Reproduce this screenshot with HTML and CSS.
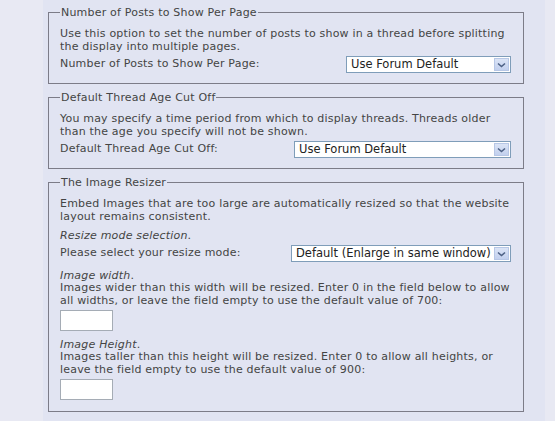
FILE: index.html
```html
<!DOCTYPE html>
<html>
<head>
<meta charset="utf-8">
<link rel="stylesheet" href="styles.css">
</head>
<body>
<div class="page">
  <fieldset class="box">
    <legend>Number of Posts to Show Per Page</legend>
    <div class="inner">
      <p class="desc">Use this option to set the number of posts to show in a thread before splitting the display into multiple pages.</p>
      <div class="row">
        <span class="label">Number of Posts to Show Per Page:</span>
        <div class="select w165"><span class="val">Use Forum Default</span><span class="arrow"><svg width="9" height="6" viewBox="0 0 9 6"><path d="M1 1.5 L4.5 4.5 L8 1.5" fill="none" stroke="#4d6185" stroke-width="1.6"/></svg></span></div>
      </div>
    </div>
  </fieldset>

  <fieldset class="box">
    <legend>Default Thread Age Cut Off</legend>
    <div class="inner">
      <p class="desc">You may specify a time period from which to display threads. Threads older than the age you specify will not be shown.</p>
      <div class="row">
        <span class="label">Default Thread Age Cut Off:</span>
        <div class="select w217"><span class="val">Use Forum Default</span><span class="arrow"><svg width="9" height="6" viewBox="0 0 9 6"><path d="M1 1.5 L4.5 4.5 L8 1.5" fill="none" stroke="#4d6185" stroke-width="1.6"/></svg></span></div>
      </div>
    </div>
  </fieldset>

  <fieldset class="box">
    <legend>The Image Resizer</legend>
    <div class="inner">
      <p class="desc">Embed Images that are too large are automatically resized so that the website layout remains consistent.</p>
      <div class="section">
        <p class="title"><em>Resize mode selection</em>.</p>
        <div class="row">
          <span class="label">Please select your resize mode:</span>
          <div class="select w220"><span class="val">Default (Enlarge in same window)</span><span class="arrow"><svg width="9" height="6" viewBox="0 0 9 6"><path d="M1 1.5 L4.5 4.5 L8 1.5" fill="none" stroke="#4d6185" stroke-width="1.6"/></svg></span></div>
        </div>
      </div>
      <div class="section">
        <p class="title"><em>Image width</em>.</p>
        <p class="text">Images wider than this width will be resized. Enter 0 in the field below to allow all widths, or leave the field empty to use the default value of 700:</p>
        <div class="input"></div>
      </div>
      <div class="section">
        <p class="title"><em>Image Height</em>.</p>
        <p class="text">Images taller than this height will be resized. Enter 0 to allow all heights, or leave the field empty to use the default value of 900:</p>
        <div class="input"></div>
      </div>
    </div>
  </fieldset>
</div>
</body>
</html>
```

FILE: styles.css
```css
html, body {
  margin: 0;
  padding: 0;
}
body {
  background: #e8e9f3;
  font-family: "DejaVu Sans", Verdana, sans-serif;
  font-size: 11px;
  letter-spacing: 0.2px;
  color: #444;
  width: 555px;
  height: 421px;
  overflow: hidden;
}
.page {
  margin-left: 43px;
  width: 502px;
  height: 421px;
  background: #e1e4f2;
  padding: 6px 0 0 5px;
  box-sizing: border-box;
}
.box {
  width: 476px;
  box-sizing: border-box;
  border: 1px solid #7c7c88;
  margin: 0 0 7px 0;
  padding: 0 11px 10px 11px;
  line-height: 13px;
}
.box:last-child {
  padding-bottom: 11px;
}
legend {
  padding: 0 1px;
  color: #444;
}
.inner {
  padding-top: 8px;
}
p {
  margin: 0;
}
.row {
  display: flex;
  align-items: flex-start;
  justify-content: space-between;
  margin-top: 3px;
}
.label {
  margin-top: 1px;
}
.select {
  height: 17px;
  box-sizing: border-box;
  border: 1px solid #7f9db9;
  background: #fff;
  display: flex;
  align-items: center;
  justify-content: space-between;
  font-size: 11.5px;
  letter-spacing: 0;
  color: #222;
  padding: 1px 1px 1px 4px;
  margin-right: 1px;
  white-space: nowrap;
}
.w165 { width: 165px; }
.w217 { width: 217px; }
.w220 { width: 220px; }
.arrow {
  flex: none;
  width: 15px;
  height: 13px;
  box-sizing: border-box;
  border: 1px solid #b7c7e6;
  background: linear-gradient(#dbe4f6, #c2d0ee);
  display: flex;
  align-items: center;
  justify-content: center;
}
.section {
  margin-top: 6px;
}
.section + .section {
  margin-top: 7px;
}
.title em {
  font-style: italic;
}
.text {
  margin-top: -1px;
}
.input {
  width: 53px;
  height: 21px;
  box-sizing: border-box;
  border: 1px solid #a5acb5;
  background: #fff;
  margin-top: 3px;
}
```
